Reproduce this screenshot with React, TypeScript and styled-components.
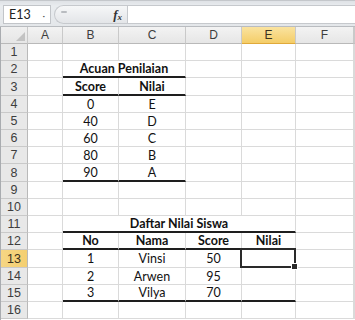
import React from "react";
import styled, { createGlobalStyle } from "styled-components";

const GlobalStyle = createGlobalStyle`
  html, body {
    margin: 0;
    padding: 0;
    background: #ffffff;
  }
  body {
    font-family: "Lato", "Liberation Sans", sans-serif;
    overflow: hidden;
  }
`;

const COLS = ["A", "B", "C", "D", "E", "F", ""];
const ROW_HEIGHTS = [17, 17, 18, 17, 17, 17, 17, 18, 17, 17, 17, 17, 18, 17, 17, 17];
const SELECTED_COL = "E";
const SELECTED_ROW = 13;

type Cell = {
  text?: string;
  bold?: boolean;
  span?: number;
  rule?: boolean;
  selected?: boolean;
};

// cells keyed by row number -> column letter
const sheet: Record<number, Record<string, Cell>> = {
  2: { B: { text: "Acuan Penilaian", bold: true, span: 2, rule: true } },
  3: {
    B: { text: "Score", bold: true, rule: true },
    C: { text: "Nilai", bold: true, rule: true },
  },
  4: { B: { text: "0" }, C: { text: "E" } },
  5: { B: { text: "40" }, C: { text: "D" } },
  6: { B: { text: "60" }, C: { text: "C" } },
  7: { B: { text: "80" }, C: { text: "B" } },
  8: { B: { text: "90", rule: true }, C: { text: "A", rule: true } },
  11: { B: { text: "Daftar Nilai Siswa", bold: true, span: 4, rule: true } },
  12: {
    B: { text: "No", bold: true, rule: true },
    C: { text: "Nama", bold: true, rule: true },
    D: { text: "Score", bold: true, rule: true },
    E: { text: "Nilai", bold: true, rule: true },
  },
  13: { B: { text: "1" }, C: { text: "Vinsi" }, D: { text: "50" }, E: { selected: true } },
  14: { B: { text: "2" }, C: { text: "Arwen" }, D: { text: "95" } },
  15: {
    B: { text: "3", rule: true },
    C: { text: "Vilya", rule: true },
    D: { text: "70", rule: true },
    E: { rule: true },
  },
};

const Window = styled.div`
  width: 355px;
  height: 320px;
  display: flex;
  flex-direction: column;
  overflow: hidden;
`;

const FormulaBar = styled.div`
  height: 27px;
  box-sizing: border-box;
  display: flex;
  align-items: flex-start;
  padding: 4px 0 0 3px;
  background: linear-gradient(#dfe2e6, #e9ecef 20%, #e4e7ea);
  border-top: 1px solid #c4c7cb;
  border-bottom: 1px solid #b9bcc0;
`;

const NameBox = styled.div`
  width: 48px;
  height: 19px;
  box-sizing: border-box;
  background: #ffffff;
  border: 1px solid #c2c5c9;
  display: flex;
  align-items: center;
  justify-content: space-between;
  padding: 0 5px 0 5px;
  font-size: 12.5px;
  color: #222;
`;

const Arrow = styled.span`
  font-size: 10px;
  color: #555;
  line-height: 1;
`;

const FxBox = styled.div`
  margin-left: 3px;
  width: 73px;
  height: 19px;
  box-sizing: border-box;
  border: 1px solid #c6c9cd;
  border-right: none;
  border-radius: 10px 0 0 10px;
  background: linear-gradient(#f6f7f8, #e3e5e8);
  display: flex;
  align-items: center;
  justify-content: space-between;
  padding: 0 5px 0 6px;
`;

const Grip = styled.span`
  width: 6px;
  height: 2px;
  border-radius: 1px;
  background: #b9bcc0;
  margin-bottom: 5px;
`;

const Fx = styled.span`
  font-family: "Liberation Serif", serif;
  font-style: italic;
  font-weight: bold;
  font-size: 13px;
  color: #333;
  sub {
    font-size: 9px;
    vertical-align: -1px;
  }
`;

const FormulaInput = styled.div`
  flex: 1;
  height: 19px;
  box-sizing: border-box;
  background: #ffffff;
  border: 1px solid #c6c9cd;
  border-right: none;
`;

const Grid = styled.div`
  flex: 1;
  display: grid;
  grid-template-columns: 27px 35px 56px 67px 56px 54px 58px 1fr;
  grid-template-rows: 17px ${ROW_HEIGHTS.map((h) => `${h}px`).join(" ")};
  border-left: 2px solid #a9acb0;
  margin-left: -1px;
`;

const HeaderCell = styled.div<{ $active?: boolean }>`
  position: relative;
  box-sizing: border-box;
  display: flex;
  align-items: center;
  justify-content: center;
  font-family: "Liberation Sans", sans-serif;
  font-size: 12px;
  color: ${(p) => (p.$active ? "#3a3220" : "#3d3d3d")};
  background: ${(p) =>
    p.$active
      ? "linear-gradient(#fae3a0, #f4cd68)"
      : "linear-gradient(#f3f3f3, #e6e6e6)"};
  border-right: 1px solid #c9c9c9;
  border-bottom: 1px solid ${(p) => (p.$active ? "#e0a93a" : "#b9b9b9")};
`;

const RowHeader = styled(HeaderCell)`
  background: ${(p) =>
    p.$active ? "linear-gradient(90deg, #f6d684, #f4cf70)" : "#e8e8e8"};
  border-right: 1px solid #b9b9b9;
  border-bottom: 1px solid #c9c9c9;
  font-size: 12.5px;
`;

const Corner = styled(HeaderCell)`
  background: linear-gradient(#f0f0f0, #e6e6e6);
  svg {
    position: absolute;
    right: 2px;
    bottom: 2px;
  }
`;

const DataCell = styled.div<{ $span: number; $bold?: boolean; $rule?: boolean; $selected?: boolean }>`
  position: relative;
  grid-column: span ${(p) => p.$span};
  box-sizing: border-box;
  display: flex;
  align-items: center;
  justify-content: center;
  font-size: 12.5px;
  font-weight: ${(p) => (p.$bold ? 700 : 400)};
  color: #111;
  white-space: nowrap;
  border-right: 1px solid #dadada;
  border-bottom: ${(p) => (p.$rule ? "2px solid #1e1e1e" : "1px solid #dadada")};

  ${(p) =>
    p.$selected &&
    `
    &::before {
      content: "";
      position: absolute;
      top: -2px;
      left: -2px;
      right: -1px;
      bottom: -1px;
      border: 2px solid #2a2a2a;
      z-index: 2;
    }
    &::after {
      content: "";
      position: absolute;
      right: -3px;
      bottom: -3px;
      width: 5px;
      height: 5px;
      background: #2a2a2a;
      border: 1px solid #ffffff;
      z-index: 3;
    }
  `}
`;

function buildRow(row: number) {
  const defs = sheet[row] || {};
  const cells: React.ReactNode[] = [];
  let skip = 0;
  COLS.forEach((col, i) => {
    if (skip > 0) {
      skip--;
      return;
    }
    const c = defs[col] || {};
    const span = c.span || 1;
    skip = span - 1;
    cells.push(
      <DataCell
        key={`${row}-${i}`}
        $span={span}
        $bold={c.bold}
        $rule={c.rule}
        $selected={c.selected}
      >
        {c.text}
      </DataCell>
    );
  });
  return cells;
}

const App: React.FC = () => {
  return (
    <>
      <GlobalStyle />
      <Window>
        <FormulaBar>
          <NameBox>
            E13
            <Arrow>·</Arrow>
          </NameBox>
          <FxBox>
            <Grip />
            <Fx>
              f<sub>x</sub>
            </Fx>
          </FxBox>
          <FormulaInput />
        </FormulaBar>
        <Grid>
          <Corner>
            <svg width="9" height="9" viewBox="0 0 9 9">
              <path d="M9 0 L9 9 L0 9 Z" fill="#c3c3c3" />
            </svg>
          </Corner>
          {COLS.map((col, i) => (
            <HeaderCell key={`h${i}`} $active={col === SELECTED_COL}>
              {col}
            </HeaderCell>
          ))}
          {ROW_HEIGHTS.map((_, idx) => {
            const row = idx + 1;
            return (
              <React.Fragment key={row}>
                <RowHeader $active={row === SELECTED_ROW}>{row}</RowHeader>
                {buildRow(row)}
              </React.Fragment>
            );
          })}
        </Grid>
      </Window>
    </>
  );
};

export default App;
